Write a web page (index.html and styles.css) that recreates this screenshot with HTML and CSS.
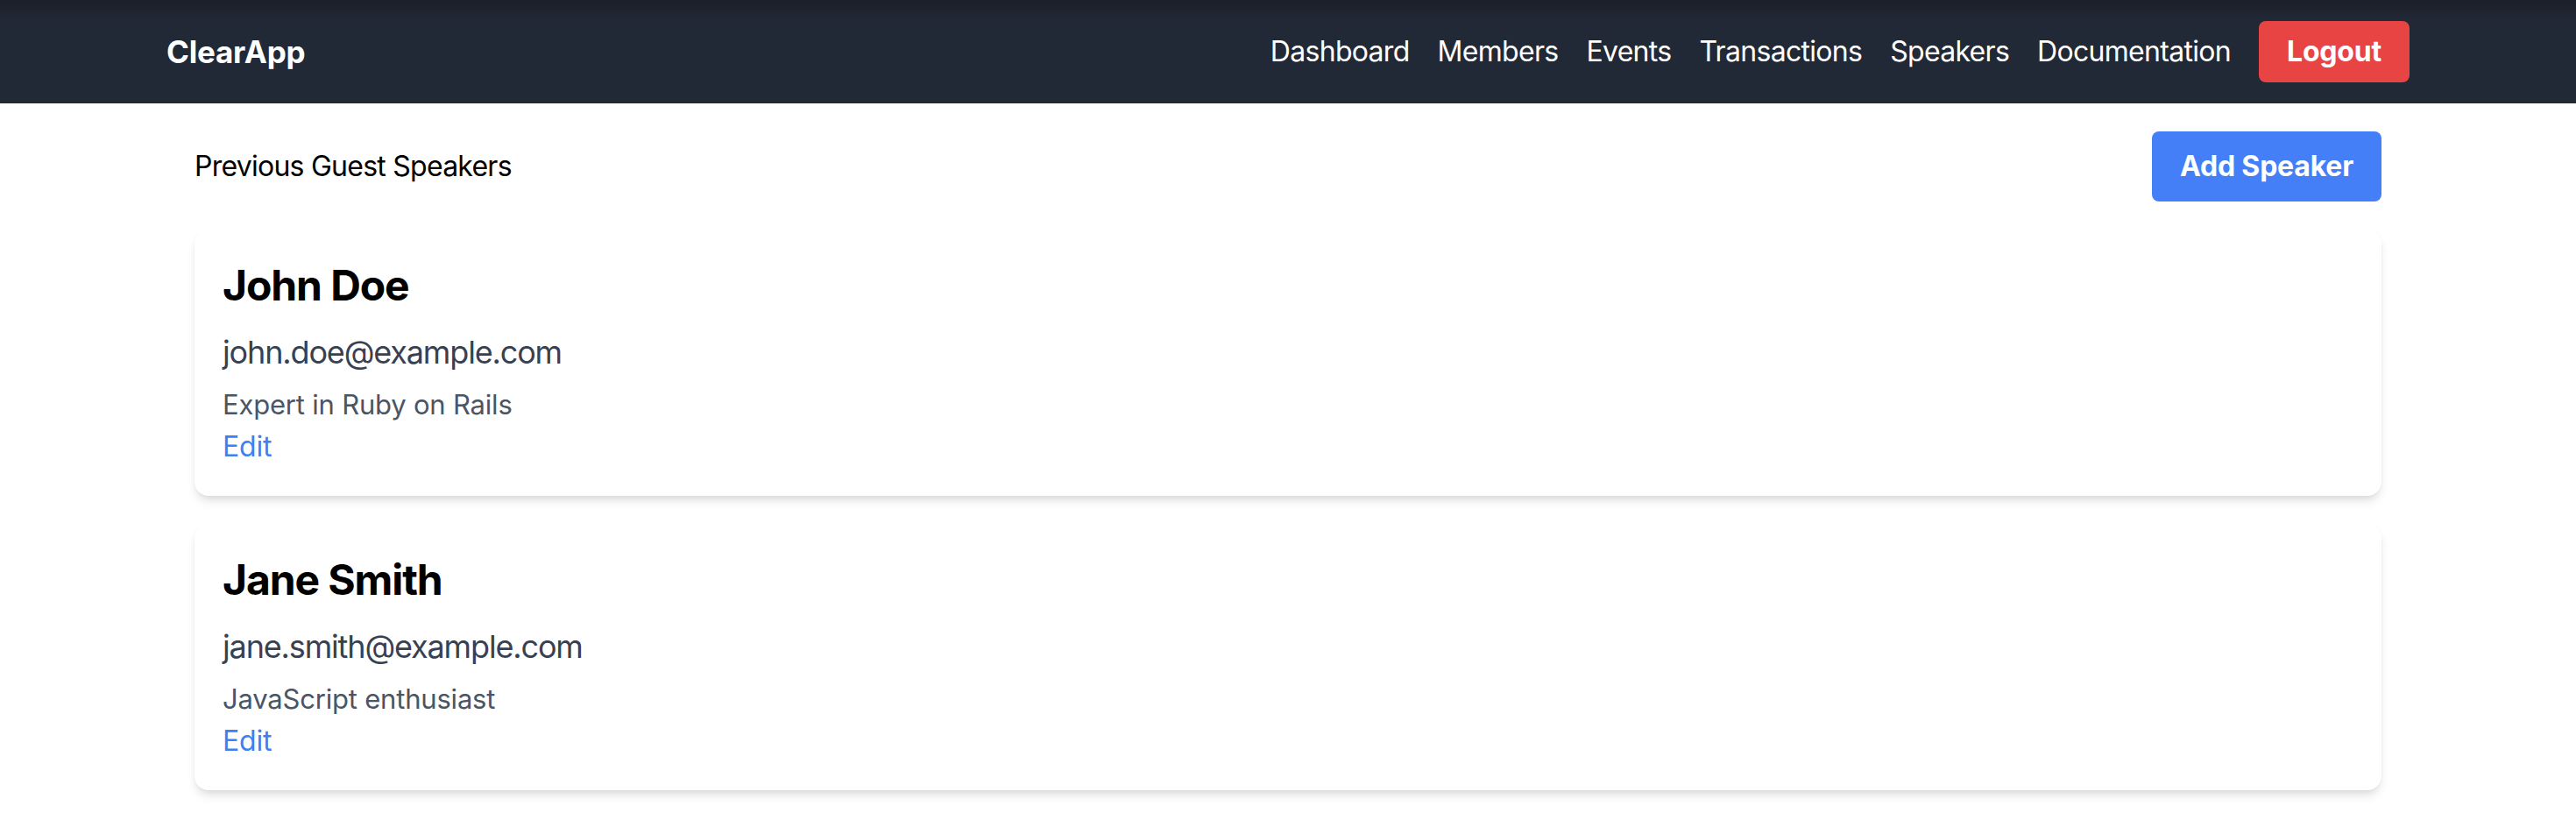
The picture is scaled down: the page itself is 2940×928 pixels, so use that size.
FILE: index.html
```html
<!DOCTYPE html>
<html lang="en">
<head>
<meta charset="utf-8">
<title>ClearApp - Speakers</title>
<link rel="stylesheet" href="styles.css">
</head>
<body>
<nav class="navbar">
  <div class="nav-inner">
    <a class="brand" href="#">ClearApp</a>
    <div class="nav-links">
      <a class="nav-link" href="#">Dashboard</a>
      <a class="nav-link" href="#">Members</a>
      <a class="nav-link" href="#">Events</a>
      <a class="nav-link" href="#">Transactions</a>
      <a class="nav-link" href="#">Speakers</a>
      <a class="nav-link" href="#">Documentation</a>
      <a class="btn btn-logout" href="#">Logout</a>
    </div>
  </div>
</nav>
<main class="main">
  <div class="page-head">
    <h1 class="page-title">Previous Guest Speakers</h1>
    <a class="btn btn-add" href="#">Add Speaker</a>
  </div>
  <div class="card">
    <h2 class="card-name">John Doe</h2>
    <p class="card-email">john.doe@example.com</p>
    <p class="card-desc">Expert in Ruby on Rails</p>
    <a class="card-edit" href="#">Edit</a>
  </div>
  <div class="card">
    <h2 class="card-name">Jane Smith</h2>
    <p class="card-email">jane.smith@example.com</p>
    <p class="card-desc">JavaScript enthusiast</p>
    <a class="card-edit" href="#">Edit</a>
  </div>
</main>
</body>
</html>
```
FILE: styles.css
```css
* { box-sizing: border-box; }
html, body { margin: 0; padding: 0; }
body {
  background: #ffffff;
  font-family: Inter, "Noto Sans", "Liberation Sans", sans-serif;
  color: #000;
}
a { text-decoration: none; }

.navbar {
  height: 118px;
  background: linear-gradient(to bottom, #1a1f29 0px, #212835 22px, #212936 40px, #212936 100%);
}
.nav-inner {
  max-width: 2560px;
  margin: 0 auto;
  height: 100%;
  display: flex;
  align-items: center;
  justify-content: space-between;
}
.brand {
  color: #fff;
  font-weight: 700;
  font-size: 35px;
  letter-spacing: -0.2px;
  line-height: 56px;
}
.nav-links {
  display: flex;
  align-items: center;
  gap: 32px;
}
.nav-link {
  color: #fff;
  font-size: 32px;
  line-height: 48px;
  letter-spacing: -0.7px;
}
.btn {
  display: inline-block;
  color: #fff;
  font-weight: 700;
  font-size: 32px;
  line-height: 48px;
  border-radius: 8px;
  padding: 16px 32px;
  letter-spacing: -0.2px;
}
.btn-logout {
  background: #e84444;
  padding: 11px 32px;
}
.btn-add {
  background: #457ff7;
}

.main {
  max-width: 2560px;
  margin: 0 auto;
  padding: 32px 32px;
}
.page-head {
  display: flex;
  align-items: center;
  justify-content: space-between;
  margin-bottom: 32px;
}
.page-title {
  margin: 0;
  font-size: 32px;
  line-height: 48px;
  font-weight: 400;
  color: #000;
  letter-spacing: -0.75px;
}
.card {
  background: #fff;
  border-radius: 16px;
  padding: 32px;
  margin-bottom: 32px;
  box-shadow: 0 8px 12px -2px rgba(0,0,0,0.1), 0 4px 8px -4px rgba(0,0,0,0.1), 0 0 2px rgba(0,0,0,0.03);
}
.card-name {
  margin: 0 0 16px;
  font-size: 48px;
  line-height: 64px;
  font-weight: 700;
  color: #000;
  letter-spacing: -1.1px;
}
.card-email {
  margin: 0;
  font-size: 36px;
  line-height: 56px;
  color: #374151;
  letter-spacing: -1.15px;
}
.card-desc {
  margin: 8px 0 0;
  font-size: 31px;
  line-height: 48px;
  color: #4b5563;
  letter-spacing: -0.2px;
}
.card-edit {
  display: block;
  font-size: 32px;
  line-height: 48px;
  color: #3f7ff6;
  letter-spacing: -0.2px;
}
```
